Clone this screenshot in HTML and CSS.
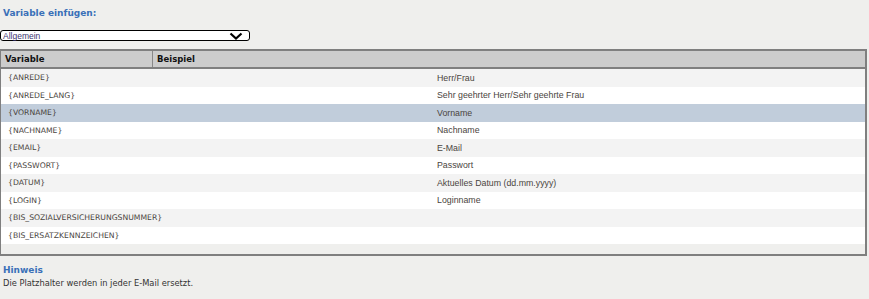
FILE: index.html
```html
<!DOCTYPE html>
<html lang="de">
<head>
<meta charset="UTF-8" />
<title>Variable einfügen</title>
<link rel="stylesheet" href="styles.css">
</head>
<body>
  <div class="page">
    <h2 class="section-title">Variable einfügen:</h2>

    <div class="select">
      <span>Allgemein</span>
      <svg class="chevron" width="14" height="8" viewBox="0 0 14 8">
        <path d="M1.5 1.5 L7 6.5 L12.5 1.5" fill="none" stroke="#000" stroke-width="2.2" />
      </svg>
    </div>

    <div class="var-table">
      <div class="head">
        <div class="head-cell first">Variable</div>
        <div class="head-cell">Beispiel</div>
      </div>
      <div class="rows">
        <div class="row"><span>{ANREDE}</span><span>Herr/Frau</span></div>
        <div class="row"><span>{ANREDE_LANG}</span><span>Sehr geehrter Herr/Sehr geehrte Frau</span></div>
        <div class="row selected"><span>{VORNAME}</span><span>Vorname</span></div>
        <div class="row"><span>{NACHNAME}</span><span>Nachname</span></div>
        <div class="row"><span>{EMAIL}</span><span>E-Mail</span></div>
        <div class="row"><span>{PASSWORT}</span><span>Passwort</span></div>
        <div class="row"><span>{DATUM}</span><span>Aktuelles Datum (dd.mm.yyyy)</span></div>
        <div class="row"><span>{LOGIN}</span><span>Loginname</span></div>
        <div class="row"><span>{BIS_SOZIALVERSICHERUNGSNUMMER}</span><span></span></div>
        <div class="row"><span>{BIS_ERSATZKENNZEICHEN}</span><span></span></div>
      </div>
    </div>

    <h3 class="hint-title">Hinweis</h3>
    <p class="hint">Die Platzhalter werden in jeder E-Mail ersetzt.</p>
  </div>
</body>
</html>
```

FILE: styles.css
```css
body {
  margin: 0;
  background: #efefed;
  font-family: 'DejaVu Sans', Verdana, sans-serif;
  color: #333;
}
.page {
  padding: 7px 0 0 0;
}
.section-title {
  margin: 0 0 0 3px;
  font-size: 9px;
  line-height: 13px;
  color: #3a70b8;
  font-weight: bold;
}
.select {
  display: flex;
  align-items: center;
  justify-content: space-between;
  width: 250px;
  height: 11px;
  margin-top: 10px;
  box-sizing: border-box;
  border: 1.5px solid #000;
  border-radius: 3px;
  background: #fff;
  padding: 0 6px 0 2px;
  font-family: 'Liberation Sans', Arial, sans-serif;
  font-size: 8.5px;
  color: #3c3470;
}
.chevron {
  display: block;
}
.var-table {
  margin-top: 8px;
  width: 867px;
  box-sizing: border-box;
  border: 2px solid #7f7f7f;
  border-left-width: 1px;
  padding-bottom: 10px;
}
.head {
  display: grid;
  grid-template-columns: 152px 1fr;
  background: #cccccc;
  border-bottom: 2px solid #7f7f7f;
  height: 16px;
}
.head-cell {
  padding-left: 4px;
  font-size: 8.5px;
  font-weight: bold;
  line-height: 16px;
  color: #111;
}
.head-cell.first {
  border-right: 1px solid #888;
}
.row {
  display: grid;
  grid-template-columns: 436px 1fr;
  height: 17.5px;
  align-items: center;
  background: #fff;
  font-size: 7.7px;
  color: #4a4540;
}
.row span:last-child {
  font-family: 'Liberation Sans', Arial, sans-serif;
  font-size: 8.8px;
}
.row:nth-child(odd) {
  background: #f3f3f3;
}
.row.selected {
  background: #c1cddb;
}
.row span:first-child {
  padding-left: 7px;
}
.hint-title {
  margin: 8px 0 0 3px;
  font-size: 9px;
  line-height: 12px;
  color: #3a70b8;
  font-weight: bold;
}
.hint {
  margin: 2px 0 0 3px;
  font-size: 8.3px;
  line-height: 11px;
  color: #333;
}
```
